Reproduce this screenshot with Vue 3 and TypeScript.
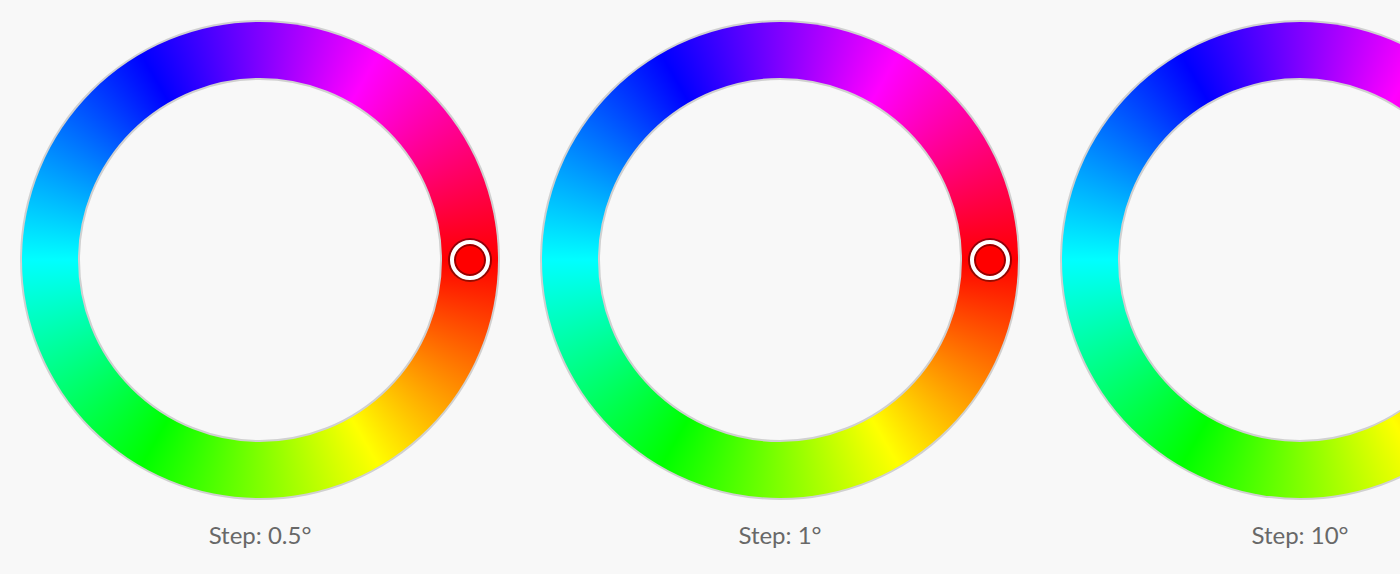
<script setup lang="ts">
import { reactive } from 'vue'

interface Wheel {
  id: string
  step: number
  hue: number
}

const wheels = reactive<Wheel[]>([
  { id: 'wheel-half', step: 0.5, hue: 0 },
  { id: 'wheel-one', step: 1, hue: 0 },
  { id: 'wheel-ten', step: 10, hue: 0 },
])

function pick(event: PointerEvent, wheel: Wheel) {
  const box = (event.currentTarget as HTMLElement).getBoundingClientRect()
  const x = event.clientX - box.left - box.width / 2
  const y = event.clientY - box.top - box.height / 2
  const angle = ((Math.atan2(y, x) * 180) / Math.PI + 360) % 360
  wheel.hue = (Math.round(angle / wheel.step) * wheel.step) % 360
}

function drag(event: PointerEvent, wheel: Wheel) {
  if (event.buttons === 1) pick(event, wheel)
}
</script>

<template>
  <main class="examples">
    <section v-for="wheel in wheels" :key="wheel.id" class="example">
      <div
        class="wheel"
        @pointerdown="pick($event, wheel)"
        @pointermove="drag($event, wheel)"
      >
        <div class="hues"></div>
        <div class="hole"></div>
        <input
          :id="wheel.id"
          v-model.number="wheel.hue"
          class="slider"
          type="range"
          min="0"
          max="360"
          :step="wheel.step"
        />
        <div class="arm" :style="{ transform: `rotate(${wheel.hue}deg)` }">
          <span class="handle" :style="{ backgroundColor: `hsl(${wheel.hue}, 100%, 50%)` }"></span>
        </div>
      </div>
      <label class="caption" :for="wheel.id">Step: {{ wheel.step }}°</label>
    </section>
  </main>
</template>

<style>
body {
  background: #f8f8f8;
}
</style>

<style scoped>
.examples {
  display: flex;
  gap: 40px;
  padding: 20px;
  overflow: hidden;
  background: #f8f8f8;
  font-family: Lato, "Noto Sans", sans-serif;
}

.example {
  display: flex;
  flex: none;
  flex-direction: column;
  align-items: center;
  gap: 16px;
}

.wheel {
  position: relative;
  box-sizing: border-box;
  width: 480px;
  height: 480px;
  border-radius: 50%;
  background: #d0d0d0;
  touch-action: none;
}

.hues {
  position: absolute;
  inset: 2px;
  border-radius: 50%;
  background: conic-gradient(from 90deg, #f00, #ff0, #0f0, #0ff, #00f, #f0f, #f00);
}

.hole {
  position: absolute;
  inset: 58px;
  box-sizing: border-box;
  border: 2px solid #d0d0d0;
  border-radius: 50%;
  background: #f8f8f8;
}

.slider {
  position: absolute;
  inset: 0;
  width: 100%;
  height: 100%;
  margin: 0;
  opacity: 0;
  pointer-events: none;
}

.arm {
  position: absolute;
  inset: 0;
  display: flex;
  align-items: center;
  justify-content: flex-end;
  padding-right: 10px;
  pointer-events: none;
}

.handle {
  box-sizing: border-box;
  width: 40px;
  height: 40px;
  border: 4px solid #fff;
  border-radius: 50%;
  background-clip: padding-box;
  box-shadow:
    0 0 0 2px rgba(0, 0, 0, 0.42),
    inset 0 0 0 2px rgba(0, 0, 0, 0.42);
}

.slider:focus-visible + .arm .handle {
  outline: 2px solid #1473e6;
  outline-offset: 2px;
}

.caption {
  color: #686868;
  font-size: 24px;
  line-height: 38px;
}
</style>
